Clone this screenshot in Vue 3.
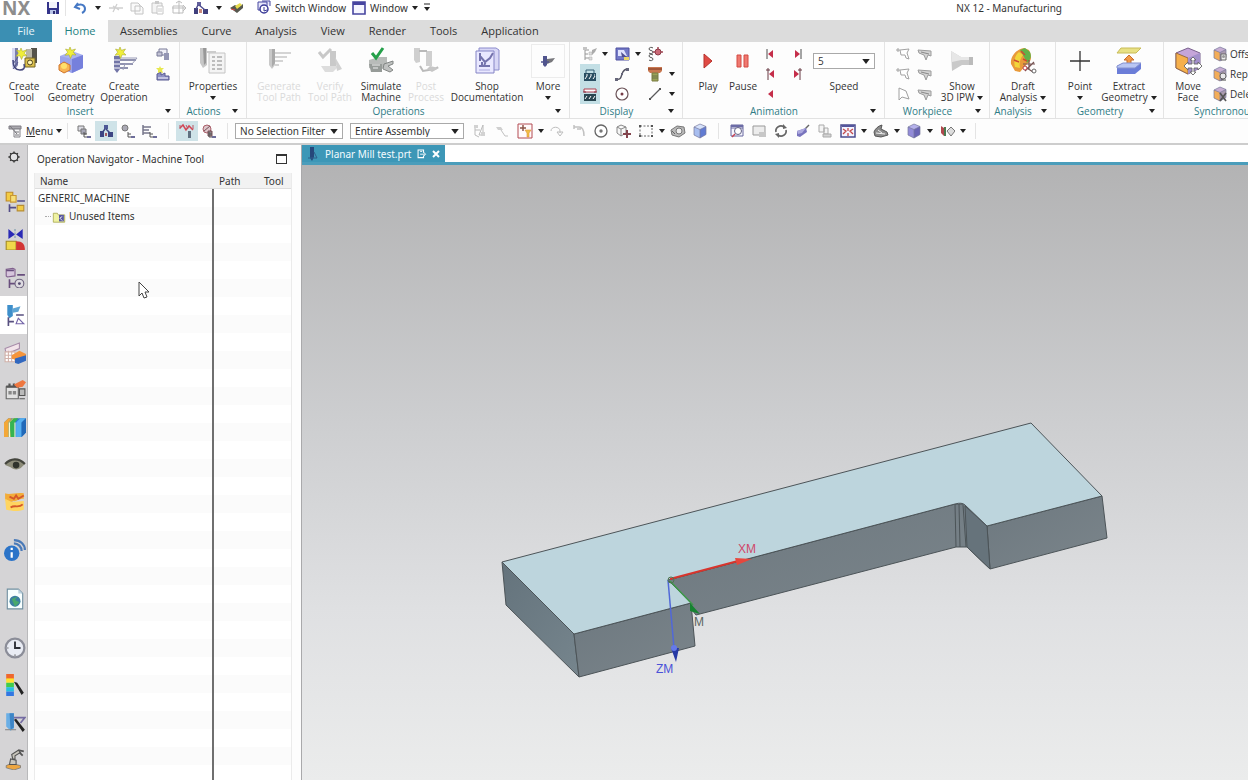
<script setup>
import { ref } from 'vue'

const caret = '<path d="M0 0h6L3 4z" fill="#222"/>'

const mill = (c1, c2) => `<path d="M2 1h6v17l-3 5-3-3z" fill="${c1}"/><path d="M5 1h3v17l-3 4z" fill="${c2}"/>`
const star = (x, y) => `<path transform="translate(${x} ${y})" d="M5 0l1.4 3.3L10.500 2 8.300 5.200 11 8 7.200 7.700 5.500 11.500 4 7.800 0 8.300 2.700 5.200.5 2l3.300 1z" fill="#f0ee3a" stroke="#a9ab35" stroke-width=".6"/>`
const flag = '<path d="M1 4h4M3 2v4M5 4l9-1-2 4 2 6-3-1-1-3-4 0z" fill="#fff" stroke="#a3a3a3"/>'
const flagShade = '<path d="M1 4l13 1v5l-3-1-2 5-2-5-5-2z" fill="#d3d3d3" stroke="#9c9c9c"/><path d="M4 6l8 2" stroke="#888"/>'
const treeNode = '<path d="M8 9v5h5M8 11h3" fill="none" stroke="#555"/><path d="M11 13h4v2h-4z" fill="#6d6d9a"/>'
const cubeOf = (a, b, c) => `<path d="M8 1l6 2.500v8L8 15 2 12V4z" fill="${a}"/><path d="M2 4l6 2.500V15l-6-3z" fill="${b}"/><path d="M8 6.500l6-3v8L8 15z" fill="${c}"/><path d="M8 1l6 2.500v8L8 15 2 12V4zM2 4l6 2.500 6-3M8 6.500V15" fill="none" stroke="#77799c" stroke-width=".7"/>`

const icons = {
  save: '<path d="M2 2h12v12H2z" fill="#34348a"/><path d="M4 2h8v6H4z" fill="#f4f4fb"/><path d="M5 10h6v4H5z" fill="#b9c4e8"/><path d="M8 11h2v3H8z" fill="#2d2d70"/>',
  undo: '<path d="M6 3L3 7l5 2" fill="none" stroke="#4578c4" stroke-width="2"/><path d="M4 6c5-3 9-1 9 3 0 2-1 3-3 4" fill="none" stroke="#4578c4" stroke-width="2"/>',
  cut: '<path d="M1 8h14M9 4L5 12M5 6l6 4" stroke="#cfcfcf" stroke-width="1.300" fill="none"/>',
  copy: '<path d="M2 3h7l2 2v6H2zM6 6h6l2 2v6H6z" fill="#fafafa" stroke="#c4c4c4"/>',
  paste: '<path d="M2 3h10v10H2z" fill="#f4f4f4" stroke="#c4c4c4"/><path d="M5 1h4v3H5z" fill="#c9c9c9"/><path d="M7 6h6v8H7zM8 9h4M8 11h4" fill="#fff" stroke="#c8c8c8"/>',
  target: '<path d="M2 6h10v7H2zM8 1v13M1 8h14M5 3l3-2 3 2M12 5l3 3-3 3" fill="none" stroke="#bdbdbd"/>',
  nav: '<path d="M4 2h4v4H4z" fill="#63609c"/><path d="M1 8h4v6H1zM10 9h5v5h-5z" fill="#403f7c"/><path d="M6 5l6 5M5 5L3 9" stroke="#514f90" stroke-width="1.500"/><path d="M6 9h3v4H6z" fill="#c98a7b"/>',
  touch: '<path d="M1 8l5-3 4 2 4-3v4l-6 5z" fill="#57584f"/><path d="M6 6l5-3 2 2-5 4z" fill="#e7dc4d"/><path d="M2 9l4 1" stroke="#d44"/>',
  switchw: '<path d="M2 2h9v8H2zM6 1h8v5" fill="#e6e6fa" stroke="#4646a0"/><circle cx="8" cy="9" r="4" fill="#fff" stroke="#3b3b98" stroke-width="1.500"/><path d="M8 7v4l3-1" stroke="#3b3b98" fill="none"/>',
  win: '<path d="M2 2h12v12H2z" fill="#f5f5ff" stroke="#4745a0" stroke-width="1.600"/><path d="M2 2h12v3H2z" fill="#4745a0"/>',
  custom: '<path d="M5 4h6" stroke="#222"/><path d="M5 7h6l-3 4z" fill="#222"/>',

  createTool: mill('#d5d8f2', '#7a7dab') + '<path d="M3 17l5-7M3 22l5-7" stroke="#55588e"/><path d="M21 1h6v15h-6z" fill="#55534b"/><path d="M16 2h6v12h-6z" fill="#b9b6a7"/><path d="M15 11h10v9H15z" fill="#dcc14d" stroke="#746525"/><circle cx="20" cy="15.500" r="2.500" fill="#fff3b0" stroke="#4e431b"/><path d="M3 13c0 6 2 10 7 10 4 0 5-2 4-6" fill="none" stroke="#44487c" stroke-width="1.500"/>' + star(6, 1),
  createGeom: '<path d="M3 9l12-5 11 4v13l-11 5L3 21z" fill="#a9b2f0"/><path d="M15 12l11-4v13l-11 5z" fill="#7680dc"/><path d="M3 9l12 3v14L3 21z" fill="#9aa3ea"/><path d="M2 18l5-3 6 3v5l-6 3-5-3z" fill="#f8b455" stroke="#d0752b"/><circle cx="7" cy="19" r="3" fill="#ffe06b"/>' + star(8, 0),
  createOp: '<path d="M4 9h6v13l-3 4-3-4z" fill="#7275a7"/><path d="M4 13h6M4 17h6M4 21h6" stroke="#fff"/><path d="M10 13h16M10 17h13M10 21h8" stroke="#6c6f95" stroke-width="1.500"/><path d="M10 11h17l-5 6h-7l-2 6" fill="none" stroke="#9b9db8"/>' + star(5, 0),
  smallGeom: '<path d="M4 3h8v6H4z" fill="#efeff7" stroke="#797b98"/><path d="M2 6h5v4H2z" fill="#c2c2d4" stroke="#797b98"/><path d="M9 7h5v7H9z" fill="#9496b4"/>',
  smallOp: '<path d="M2 8l4-2v3l4-2v3h4v4H2z" fill="#8e91c5" stroke="#595b92"/><path d="M3 12h10" stroke="#f7f8ff"/><path d="M5 0l1 2h3L7 4l1 3-3-1-2 1V4L1 2h3z" fill="#e7e84d"/>',
  props: '<path d="M1 1h7v17l-4 3-3-5z" fill="#c7c7c7"/><path d="M4 1h3v15l-2 2z" fill="#989898"/><path d="M10 6h16v20H10z" fill="#f4f4f4" stroke="#c4c4c4"/><path d="M13 10h3M13 14h3M13 18h3M13 22h3M18 10h5M18 14h5M18 18h5M18 22h5" stroke="#bdbdbd" stroke-width="2"/><path d="M8 5h9" stroke="#ccc" stroke-width="2"/>',
  gen: '<path d="M4 2h6v16l-3 4-3-4z" fill="#c9c9c9"/><path d="M7 2h3v14l-3 4z" fill="#aaa"/><path d="M10 6h16M10 10h12M10 14h8M10 18h4" stroke="#c6c6c6" stroke-width="1.500"/>',
  verify: '<path d="M3 5l4 5 8-8" fill="none" stroke="#c8c8c8" stroke-width="3"/><path d="M14 4h6v16l-4 3-2-4z" fill="#c9c9c9"/><path d="M5 19h18l-6 6H9z" fill="#ddd"/><path d="M19 10l7 12-5 2z" fill="#d1d1d1"/>',
  simulate: '<path d="M2 13l10-3h8v9l-9 5-9-3z" fill="#b8bbb9"/><path d="M2 17h13v8H4z" fill="#969b98"/><path d="M17 17l9-3v3l-5 2 5 4-3 2-7-3z" fill="#bfc1c0" stroke="#828684"/><path d="M5 18h8M6 21h5" stroke="#eee"/><path d="M5 6l4 5 7-10" fill="none" stroke="#25a04a" stroke-width="3"/>',
  post: '<path d="M2 1h6v14l-4 1-2-3zM14 4h6v15h-6z" fill="#cfcfcf"/><path d="M7 4h8M8 19l3 5 12-2 3-2" fill="none" stroke="#b9b9b9" stroke-width="2"/><path d="M18 19l9 2-7 4-5-3z" fill="#c6c6c6"/>',
  shop: '<path d="M6 1h17l3 2v20H6z" fill="#d8d7f6" stroke="#8b8bcc"/><path d="M3 4h18v22H3z" fill="#e9e8ff" stroke="#8585c5"/><path d="M7 6v8M7 9l5 6 5-4 3-5M6 19h11M9 15v5M13 14l-2 5" fill="none" stroke="#7473ad" stroke-width="2"/><path d="M6 23h11" stroke="#acaae0"/>',
  more: '<path d="M3 3h4v9l-2 2-2-2z" fill="#51558e"/><path d="M7 6l8-1-3 4-5 2z" fill="#77777c"/><path d="M1 9h8" stroke="#51558e" stroke-width="1.500"/>',

  dispTree: '<path d="M3 1v13M3 4h4M3 8h3M3 12h4" stroke="#969696"/><path d="M1 1h4v3H1z" fill="#c4c4c4"/><path d="M7 6h3v3H7zM7 11h3v3H7z" fill="#ddd" stroke="#aaa" stroke-width=".5"/><path d="M10 4l5-2-2 4-3 3z" fill="#ababab"/>',
  dispWin: '<path d="M2 2h13v12H2z" fill="#7379c6" stroke="#4e51a0"/><path d="M4 4h6l3 6H4z" fill="#dfe3ff"/><path d="M7 6l6 5H8z" fill="#4f4f91"/><path d="M10 11h5v3h-5z" fill="#e9d667"/>',
  ss: '<path d="M6 2c-1-1-4-1-4 1s4 1 4 3-3 2-4 1M6 9c-1-1-4-1-4 1s4 1 4 3-3 2-4 1" fill="none" stroke="#555"/><path d="M6 6h10M11 1v5" stroke="#a34957" stroke-width="1.500"/><circle cx="11" cy="6" r="3" fill="#ca6a77" stroke="#8b3b47"/>',
  machA: '<path d="M2 7h12v8H2z" fill="#294e62"/><path d="M4 7V4h8v3" fill="none" stroke="#355f75"/><path d="M4 9h2M8 9h2M12 9h1M3 13l2-3M7 13l2-3M11 13l2-3" stroke="#fff"/>',
  machB: '<path d="M2 3h12v3H2z" fill="#fff" stroke="#ad4150"/><path d="M2 8h12v7H2z" fill="#294650"/><path d="M3 13l2-3M7 13l2-3M11 13l2-3" stroke="#fff"/><path d="M1 6h3M12 6h3" stroke="#883644"/>',
  curve: '<path d="M2 13c5 1 5-2 6-5s2-5 6-5" fill="none" stroke="#545463" stroke-width="1.400"/><path d="M1 12h3v3H1zM12 2h3v3h-3zM7 7h2v2H7z" fill="#66667a"/>',
  circle: '<circle cx="8" cy="8" r="6" fill="#fff" stroke="#6b5358" stroke-width="1.200"/><circle cx="8" cy="8" r="1.500" fill="#763c47"/>',
  toolDisp: '<path d="M1 1h14v4l-2 2H3L1 5z" fill="#c87851"/><path d="M1 2h14v2H1z" fill="#a35637"/><path d="M5 7h6v8H5z" fill="#9ba358" stroke="#7a7d42"/><path d="M5 10h6M5 12h6" stroke="#6a7348"/>',
  line: '<path d="M3 13L13 3" stroke="#59595b" stroke-width="1.200"/><path d="M2 12h2v2H2zM12 2h2v2h-2z" fill="#555"/>',
  play: '<path d="M6 3l8 7-8 7z" fill="#e04b44" stroke="#b7322d"/>',
  pause: '<path d="M4 4h4v12H4zM11 4h4v12h-4z" fill="#ef7970" stroke="#d44a42"/>',
  first: '<path d="M4 3v10" stroke="#4c4c4c"/><path d="M10 4v8L5 8z" fill="#c52e4a"/>',
  last: '<path d="M12 3v10" stroke="#4c4c4c"/><path d="M6 4v8l5-4z" fill="#c52e4a"/>',
  prev: '<path d="M5 2v12M3 4h4" stroke="#673943"/><path d="M11 4v8L6 8z" fill="#c52e4a"/>',
  next: '<path d="M11 2v12M9 4h4" stroke="#673943"/><path d="M5 4v8l5-4z" fill="#c52e4a"/>',
  rev: '<path d="M10 4v8L5 8z" fill="#c52e4a"/>',
  flag, flagShade,
  flagC: '<path d="M4 2v12l3-3 7 2-3-8z" fill="#fff" stroke="#a0a0a0"/>',
  ipw: '<path d="M3 4l10 6h12v8H14L4 24z" fill="#c9c9c9"/><path d="M3 4l10 6h12v3H13L4 15z" fill="#e7e7e7"/><path d="M21 10h4v8h-4z" fill="#bbb"/>',
  draft: '<path d="M2 17C1 9 8 2 15 1l5 2c3 6 3 11-2 14l-7 8-5-1z" fill="#e99a3a"/><path d="M11 3l5-2 5 4c2 5 0 8-3 11l-3-6z" fill="#61b249"/><path d="M10 5c-3 2-6 8-4 15l5 1c-1-5 0-9 3-13z" fill="#f2d53a"/><path d="M12 4l4 4M5 13l5 2M14 12l4 2" stroke="#d04a32" stroke-width="1.500"/><path d="M14 17h12M16 24l9-9M15 19l9 6M20 13v10" stroke="#765352" stroke-width="1.200"/><circle cx="16" cy="21" r="2" fill="#fff" stroke="#b93d48"/><circle cx="25" cy="24" r="2" fill="#fff" stroke="#666"/>',
  point: '<path d="M14 4v20M4 14h20" stroke="#333" stroke-width="1.300"/>',
  extract: '<path d="M6 1h20l-5 5H2z" fill="#e8e083" stroke="#c8bc59"/><path d="M14 8l5 5h-3v6h-4v-6H9z" fill="#f29945" stroke="#c86d2c"/><path d="M2 19l6-3h18v6l-6 5H2z" fill="#6b7dd8"/><path d="M2 19l6-3h18l-6 5H2z" fill="#b9c6f4" stroke="#8592d0"/>',
  moveFace: '<path d="M2 6l12-5 12 5v15l-12 6L2 21z" fill="#c5a5d9" stroke="#79618d"/><path d="M2 6l12 5v16L2 21z" fill="#f6b04c" stroke="#9a6c43"/><path d="M14 11l12-5v15l-12 6z" fill="#a390cb"/><path d="M19 10l3 3h-2v4h4v-2l4 4-4 4v-2h-4v4h2l-3 3-3-3h2v-4h-4v2l-4-4 4-4v2h4v-4h-2z" fill="#fff" stroke="#666" stroke-width=".9"/>',
  face: cubeOf('#c7aed3', '#f3ad58', '#a99aaf') + '<path d="M9 8h5v6H9z" fill="#eee" stroke="#666"/><circle cx="11.500" cy="10.500" r="1.500" fill="#999"/>',
  face2: cubeOf('#c7aed3', '#f3ad58', '#a99aaf') + '<circle cx="11" cy="10" r="3" fill="#e8e8ea" stroke="#666"/><path d="M9 14h5" stroke="#444"/>',
  face3: cubeOf('#c7aed3', '#f3ad58', '#a99aaf') + '<path d="M8 7l6 8M14 7l-6 8" stroke="#555" stroke-width="1.700"/>',

  menu: '<path d="M2 3h12v3H2z" fill="#aaa9af" stroke="#7e7d84"/><path d="M7 6h6v8H7z" fill="#f5f5f6" stroke="#848389"/><path d="M3 3l7 8M8 9h4M8 12h4" stroke="#77767b"/>',
  selA: '<path d="M2 3h6v5H2z" fill="#dcdce4" stroke="#777"/><path d="M5 6h5v5H5z" fill="#a7a7b7" stroke="#777"/>' + treeNode,
  selB: '<path d="M6 2h4v4H6z" fill="#4c5896"/><path d="M2 8h4v6H2zM10 9h5v5h-5z" fill="#3d4683"/><path d="M8 6l5 5M7 6l-3 4" stroke="#3d4683" stroke-width="1.500"/><path d="M7 10h2v3H7z" fill="#a35b62"/>',
  selC: '<circle cx="5" cy="5" r="3" fill="#aaa9b4" stroke="#777"/>' + treeNode,
  selD: '<path d="M1 2v10M1 4h8M1 7h6M1 10h7" stroke="#77778c" stroke-width="1.500"/>' + treeNode,
  selE: '<path d="M1 5l3-3 3 5 3-4 4 4" fill="none" stroke="#d44555" stroke-width="1.500"/><path d="M9 8h3v7H9z" fill="#607080"/><path d="M1 2v4M7 2l2 4M14 2v4" stroke="#b95563"/>',
  selF: '<circle cx="6" cy="6" r="4" fill="#ddc5ca" stroke="#aa5f69"/><path d="M3 8l6-5M7 8h4v5H7z" stroke="#785158" fill="#8b8085"/>' + treeNode,
  grayA: '<path d="M3 3v9l4 2M3 7h5M11 2L7 12h4z" fill="none" stroke="#bbb"/><path d="M2 2h4v3H2zM9 9h4v4H9z" fill="#d2d2d2"/>',
  grayB: '<path d="M2 4h5l2 3H4z" fill="#d0d0d0"/><path d="M7 7l4 6h3" stroke="#c1c1c1" fill="none"/>',
  snap: '<path d="M1 1h14v14H1z" fill="#fffafa" stroke="#b34b52"/><path d="M3 5h6M6 2v6" stroke="#8c5448" stroke-width="1.500"/><path d="M8 7h6l-2 3v4h-2v-4z" fill="#efbf45" stroke="#e09238" stroke-width=".6"/>',
  grayC: '<path d="M2 8c0-5 9-5 9 0v2M8 9h6l-3 4z" fill="none" stroke="#bdbdbd"/>',
  grayD: '<path d="M3 4h5c4 0 5 3 5 9M3 2v4M6 6h4" fill="none" stroke="#c1c1c1" stroke-width="1.500"/>',
  ring: '<circle cx="8" cy="8" r="6" fill="#fff" stroke="#666" stroke-width="1.300"/><circle cx="8" cy="8" r="1.700" fill="#777"/>',
  cubePlus: '<path d="M2 4l4-2 5 2v6l-5 3-4-3zM2 4l4 2 5-2M6 6v7" fill="#f6f6f6" stroke="#888"/><path d="M12 7v8M8 11h8" stroke="#83444d" stroke-width="2"/>',
  dash: '<path d="M2 3h12v10H2z" fill="none" stroke="#666" stroke-dasharray="2 1.500"/><path d="M1 2h2v2H1zM13 2h2v2h-2zM1 12h2v2H1zM13 12h2v2h-2z" fill="#555"/>',
  rock: '<path d="M1 7l6-4 7 1 1 6-6 4-7-2z" fill="#b9b9b9" stroke="#777"/><circle cx="9" cy="8" r="3" fill="#eee" stroke="#777"/><path d="M2 8l3 3" stroke="#666"/>',
  cubeBlue: cubeOf('#d6e2fb', '#a8bef0', '#617bd2'),
  cubeViolet: cubeOf('#b5b1eb', '#928bd8', '#6964b5'),
  fit: '<path d="M2 2h12v11H2zM2 5h12" fill="#f7f7ff" stroke="#67679f"/><path d="M2 2h12v2H2z" fill="#6c6ca6"/><circle cx="9" cy="8" r="3.500" fill="#fff" stroke="#616184"/><path d="M6 11l-3 3" stroke="#c94252" stroke-width="1.500"/>',
  shot: '<path d="M2 3h12v9H2z" fill="#ececec" stroke="#999"/><path d="M8 9h7v5H8z" fill="#c7c7c7"/>',
  rotate: '<path d="M3 9a5 5 0 018-5M13 7a5 5 0 01-8 5" fill="none" stroke="#666" stroke-width="1.700"/><path d="M10 1l4 4-4 1zM6 15l-4-4 4-1z" fill="#666"/>',
  brush: '<path d="M10 6l4-4" stroke="#666" stroke-width="1.500"/><path d="M2 8l9-3 1 4-7 5-3-1z" fill="#7874bd"/><path d="M2 8l9-3-4 5-4 1z" fill="#ada9de"/>',
  grayE: '<path d="M2 2h5v7H2zM7 5h4v6H7z" fill="#f4f4f4" stroke="#aaa"/><path d="M6 11h8v3H6z" fill="#d3d3d3" stroke="#aaa"/>',
  layout: '<path d="M1 2h14v12H1z" fill="#f4f4ff" stroke="#4b4c90" stroke-width="1.500"/><path d="M2 2h12v2H2z" fill="#54559c"/><path d="M3 6l3 2-3 3M13 6l-3 2 3 3M8 5v3M8 10v3" fill="none" stroke="#c34949" stroke-width="1.300"/>',
  swirl: '<path d="M1 9c1-3 4-6 8-7L8 6l6 3 1 3-7 2-6-1z" fill="#8b8b8b" stroke="#555"/><path d="M3 10l9 1M5 7l4 3" stroke="#eee"/>',
  section: '<path d="M2 3l3 2v8l-3-3z" fill="#b0484e"/><path d="M5 4h2v9H5z" fill="#497a50"/><path d="M8 8l4-4 4 4-4 5z" fill="#ddd" stroke="#777"/>',

  gear: '<path d="M10 2v3M10 15v3M2 10h3M15 10h3M4.500 4.500l2 2M13.500 13.500l2 2M15.500 4.500l-2 2M6.500 13.500l-2 2" stroke="#333" stroke-width="2"/><circle cx="10" cy="10" r="5.500" fill="#e3e3e5" stroke="#333" stroke-width="1.800"/>',
  asm: '<path d="M2 2h6v8H2z" fill="#f3cb43" stroke="#be8b2a"/><path d="M6 5h5v6H6z" fill="#f7df78" stroke="#c79734"/><path d="M12 10h7M5 13v7M5 16h6" stroke="#534d88" stroke-width="1.500"/><path d="M12 14h6v5h-6z" fill="#f2cc46" stroke="#b88d33"/>',
  constraint: '<path d="M4 1v9l6-4zM17 1v9l-6-4z" fill="#2a2ab5"/><path d="M10 1v9" stroke="#79a" stroke-dasharray="2 1"/><path d="M2 12h9v8H2z" fill="#f0d84a" stroke="#a28b26"/><path d="M11 12c6 0 8 3 8 8h-8z" fill="#d33535"/>',
  part: '<path d="M2 3l6-1 2 1v6l-7 1-1-1z" fill="#d6c5dc" stroke="#81608d"/><path d="M2 4h7M12 8h7M5 12v8M5 16h5" stroke="#684e7d" stroke-width="1.500" fill="none"/><circle cx="14" cy="16" r="4" fill="#dedbe1" stroke="#6f6480"/><circle cx="14" cy="16" r="1.300" fill="#554c70"/>',
  opnav: '<path d="M3 1h5v10l-3 2-2-3z" fill="#3e8fcb"/><path d="M8 4l7-2-2 5-5 1z" fill="#5fa5d4"/><path d="M11 10h7M4 12v8M4 16h5" stroke="#585080" stroke-width="1.500"/><path d="M11 18l2-5 5 5z" fill="#fff" stroke="#7465a8"/>',
  mfeat: '<path d="M1 6l13-5v5L2 11z" fill="#f2e4ea" stroke="#a78ca9"/><path d="M1 9h9v9H1zM4 8v10M7 8v10M1 12h9M1 15h9" fill="#fff" stroke="#d2b2aa"/><path d="M7 12l7-4 6 3v3l-8 3-5-2z" fill="#f5953c"/><path d="M10 15l10-3v5l-7 3-3-1z" fill="#3268bf"/>',
  mcal: '<path d="M2 7h11v11H2z" fill="#e1e1e1" stroke="#666"/><path d="M2 7h11M5 4v4M9 4v4" stroke="#555" stroke-width="2"/><path d="M4 11h3v3H4zM8 11h3v3H8z" fill="#888"/><path d="M9 5l8-4 3 2-3 4-5 1z" fill="#ee7740"/><path d="M14 9h5v6h-5zM14 18h5" fill="#bbb" stroke="#555"/>',
  books: '<path d="M0 6l4-4h16v13l-4 4H0z" fill="#2f7ccc"/><path d="M0 6l4-4h3L4 6v13H0z" fill="#f3a737"/><path d="M4 6l4-4h3L9 6v13H4z" fill="#e8c34e"/><path d="M5 6l4-4h4l-3 4v13H6z" fill="#36b451"/><path d="M11 6l4-4h5l-4 4v13h-5z" fill="#54aef0"/><path d="M16 6l4-4v13l-4 4z" fill="#2269b8"/><path d="M5 6v13M10 6v13" stroke="#f4f7d8"/>',
  eye: '<path d="M1 11c4-6 12-7 18-1l-3 3c-3 3-8 2-10 0z" fill="#8d8c79"/><circle cx="11" cy="11" r="3" fill="#30332c"/><path d="M1 10c5-5 12-6 18 0" stroke="#44453d" fill="none" stroke-width="2"/>',
  pmi: '<path d="M1 3c4 2 9-1 17 0v5c-6 0-7 3-9 2-4 2-6 0-8-1z" fill="#f3ac39"/><path d="M1 8l6 3 11-1v8c-6 2-11 1-16 0z" fill="#ffd560"/><path d="M5 6l4 2 2-3 2 3 5-3M6 16c4-3 7 1 11-3" fill="none" stroke="#d5582a" stroke-width="1.700"/>',
  info: '<circle cx="7" cy="13" r="7" fill="#2c74c8"/><path d="M7 12v5M7 8v2" stroke="#fff" stroke-width="2"/><path d="M9 4c4 0 7 3 7 7M9 1c6 0 10 4 10 9" fill="none" stroke="#4a7ab8" stroke-width="2"/>',
  web: '<path d="M3 1h10l4 4v14H3z" fill="#f8ffff" stroke="#708fa0"/><path d="M13 1v4h4" fill="#bcd2df"/><circle cx="10" cy="12" r="5" fill="#3b7fa0"/><path d="M7 10l5-2-2 3 4 2-4 4z" fill="#49a96c"/>',
  clock: '<circle cx="10" cy="10" r="8.500" fill="#e9ecf4" stroke="#8b8d98" stroke-width="2"/><path d="M10 4v6h5" fill="none" stroke="#2d2f37" stroke-width="1.700"/><path d="M10 16v1M3 10h1" stroke="#444"/>',
  palette: '<path d="M2 0h7v5H2z" fill="#ef672d"/><path d="M2 4h7v4H2z" fill="#ffe32f"/><path d="M2 8h7v4H2z" fill="#41cc4d"/><path d="M2 12h7v4H2z" fill="#27bfe0"/><path d="M2 16h7v4H2z" fill="#3377e2"/><path d="M9 7l3 1 6 9-2 2z" fill="#222"/>',
  toolpal: '<path d="M2 2h7v14l-3 2-4-4z" fill="#6aaee5"/><path d="M5 2h4v13l-3 2z" fill="#3e85c5"/><path d="M9 6h10l-4 5" fill="none" stroke="#746ba2" stroke-width="1.500"/><path d="M9 8l2-1 8 10-2 2z" fill="#222"/><path d="M1 17h10" stroke="#888"/>',
  robot: '<path d="M2 16l5-2 8 2v2l-6 2-7-2z" fill="#eda641" stroke="#777" stroke-width=".7"/><path d="M5 15l1-5 5 1v4zM8 10L7 6l6-4 2 2-5 3v3z" fill="#c9c6bd" stroke="#555"/><path d="M13 2l5 1M14 4l3 3" stroke="#555" stroke-width="1.700"/>',
  folder: '<path d="M1 4h5l1 2h8v9H1z" fill="#eff2a2" stroke="#a7a850"/><path d="M8 6h6v8H8z" fill="#5857a0"/><path d="M12 8l-3 2 3 3" stroke="#fff" fill="none"/>',
  docTool: '<path d="M6 1h4v10l-2 4-2-3z" fill="#26477b"/><path d="M10 6l3 6H4" fill="none" stroke="#2f5e8b"/>',
  popout: '<path d="M11 7V3H3v11h8v-3" fill="none" stroke="#fff" stroke-width="1.500"/><path d="M6 9h7M11 6l3 3-3 3M6 5h3" fill="none" stroke="#fff" stroke-width="1.300"/>',
}

const quick = [
  { i: 'save', t: 'Save' }, { sep: true }, { i: 'undo', t: 'Undo', a: true }, { i: 'cut', t: 'Cut' },
  { i: 'copy', t: 'Copy' }, { i: 'paste', t: 'Paste' }, { i: 'target', t: 'Transform' },
  { i: 'nav', t: 'Navigator views', a: true }, { i: 'touch', t: 'Touch mode' },
]
const tabs = ['File', 'Home', 'Assemblies', 'Curve', 'Analysis', 'View', 'Render', 'Tools', 'Application']
const current = ref('Home')

const groups = [
  { id: 'insert', label: 'Insert', items: [
    { i: 'createTool', l: ['Create', 'Tool'] }, { i: 'createGeom', l: ['Create', 'Geometry'] }, { i: 'createOp', l: ['Create', 'Operation'] },
    { col: [{ i: 'smallGeom', t: 'Create Method' }, { i: 'smallOp', t: 'Create Program' }] } ] },
  { id: 'actions', label: 'Actions', items: [{ i: 'props', l: ['Properties'], drop: true }] },
  { id: 'operations', label: 'Operations', items: [
    { i: 'gen', l: ['Generate', 'Tool Path'], off: true }, { i: 'verify', l: ['Verify', 'Tool Path'], off: true },
    { i: 'simulate', l: ['Simulate', 'Machine'] }, { i: 'post', l: ['Post', 'Process'], off: true },
    { i: 'shop', l: ['Shop', 'Documentation'] }, { i: 'more', l: ['More'], drop: true, framed: true } ] },
  { id: 'display', label: 'Display', items: [
    { col: [{ i: 'dispTree', t: 'Display mode' }, { i: 'machA', t: 'Show machine', on: true }, { i: 'machB', t: 'Show setup', on: true }] },
    { carets: [1, 0, 0] },
    { col: [{ i: 'dispWin', t: 'Display window' }, { i: 'curve', t: 'Show curve' }, { i: 'circle', t: 'Show circle' }] },
    { carets: [1, 0, 0] },
    { col: [{ i: 'ss', t: 'Feeds and speeds' }, { i: 'toolDisp', t: 'Tool display' }, { i: 'line', t: 'Path line' }] },
    { carets: [0, 1, 1] } ] },
  { id: 'animation', label: 'Animation', items: [
    { i: 'play', l: ['Play'], box: 20 }, { i: 'pause', l: ['Pause'], box: 20 },
    { col: [{ i: 'first', t: 'To start' }, { i: 'prev', t: 'Previous operation' }, { i: 'rev', t: 'Play backwards' }] },
    { col: [{ i: 'last', t: 'To end' }, { i: 'next', t: 'Next operation' }, {}] },
    { speed: true } ] },
  { id: 'workpiece', label: 'Workpiece', items: [
    { col: [{ i: 'flag', t: 'Show 2D' }, { i: 'flag', t: 'Show fill' }, { i: 'flagC', t: 'Show end' }] },
    { col: [{ i: 'flagShade', t: 'Save IPW' }, { i: 'flagShade', t: 'Merge IPW' }, { i: 'flagShade', t: 'Delete IPW' }] },
    { i: 'ipw', l: ['Show', '3D IPW'], drop: true } ] },
  { id: 'analysis', label: 'Analysis', items: [{ i: 'draft', l: ['Draft', 'Analysis'], drop: true }] },
  { id: 'geometry', label: 'Geometry', items: [{ i: 'point', l: ['Point'], drop: true }, { i: 'extract', l: ['Extract', 'Geometry'], drop: true }] },
  { id: 'sync', label: 'Synchronous Modeling', items: [
    { i: 'moveFace', l: ['Move', 'Face'] },
    { col: [{ i: 'face', n: 'Offset Region' }, { i: 'face2', n: 'Replace Face' }, { i: 'face3', n: 'Delete Face' }] } ] },
]

const modeIcons = [['selA', 'Program order view'], ['selB', 'Machine tool view', true], ['selC', 'Geometry view'], ['selD', 'Method view']]
const pathIcons = [['selE', 'Show tool path', true], ['selF', 'Hide tool path']]
const snapIcons = [['grayA', 'Highlight'], ['grayB', 'Deselect'], ['snap', 'Snap point', 1], ['grayC', 'Arc'], ['grayD', 'Bend'], ['ring', 'Center'], ['cubePlus', 'Body point'], ['dash', 'Rectangle select', 1], ['rock', 'Facets'], ['cubeBlue', 'Solid']]
const viewIcons = [['fit', 'Fit'], ['shot', 'Snapshot'], ['rotate', 'Rotate'], ['brush', 'Style'], ['grayE', 'Arrange'], ['layout', 'Layout', 1], ['swirl', 'Orient', 1], ['cubeViolet', 'Shaded', 1], ['section', 'Section', 1]]

const rail = [
  ['gear', 'Settings'], ['asm', 'Assembly Navigator'], ['constraint', 'Constraint Navigator'], ['part', 'Part Navigator'],
  ['opnav', 'Operation Navigator'], ['mfeat', 'Machining Features'], ['mcal', 'Machine Tool Navigator'], ['books', 'Reuse Library'],
  ['eye', 'HD3D Tools'], ['pmi', 'Process Library'], ['info', 'Information'], ['web', 'Web Browser'], ['clock', 'History'],
  ['palette', 'Roles'], ['toolpal', 'Machining Wizard'], ['robot', 'Robot Tools'],
]
const filter = ref('No Selection Filter')
const scope = ref('Entire Assembly')
const speed = ref('5')
</script>

<template>
  <div class="app">
    <header class="titlebar">
      <strong class="logo">NX</strong>
      <template v-for="(q, k) in quick" :key="k">
        <span v-if="q.sep" class="vsep"></span>
        <button v-else class="tool" :class="{ wide: q.a }" :aria-label="q.t">
          <svg class="ic" viewBox="0 0 16 16" v-html="icons[q.i]" />
          <svg v-if="q.a" class="caret" viewBox="0 0 6 4" v-html="caret" />
        </button>
      </template>
      <button class="named"><svg class="ic" viewBox="0 0 16 16" v-html="icons.switchw" />Switch Window</button>
      <button class="named"><svg class="ic" viewBox="0 0 16 16" v-html="icons.win" />Window<svg class="caret" viewBox="0 0 6 4" v-html="caret" /></button>
      <button class="customize" aria-label="Customize"><svg class="ic" viewBox="0 0 16 16" v-html="icons.custom" /></button>
      <h1>NX 12 - Manufacturing</h1>
    </header>

    <nav class="tabs">
      <button v-for="t in tabs" :key="t" :class="{ file: t === 'File', current: t === current }" @click="current = t">{{ t }}</button>
    </nav>

    <section class="ribbon">
      <div v-for="g in groups" :key="g.id" class="group" :class="g.id">
        <div class="items">
          <template v-for="(it, k) in g.items" :key="k">
            <div v-if="it.col" class="stack">
              <template v-for="(s, n) in it.col" :key="n">
                <button v-if="s.i" class="small" :class="{ on: s.on }" :aria-label="s.t || s.n">
                  <svg class="ic" viewBox="0 0 16 16" v-html="icons[s.i]" /><span v-if="s.n">{{ s.n }}</span>
                </button>
              </template>
            </div>
            <div v-else-if="it.carets" class="stack">
              <span v-for="(c, n) in it.carets" :key="n" class="small"><svg v-if="c" class="caret" viewBox="0 0 6 4" v-html="caret" /></span>
            </div>
            <div v-else-if="it.speed" class="speed">
              <span class="combo">
                <select id="speed" v-model="speed"><option v-for="n in 10" :key="n">{{ n }}</option></select>
                <svg class="caret" viewBox="0 0 6 4" v-html="caret" />
              </span>
              <label for="speed">Speed</label>
            </div>
            <button v-else class="big" :disabled="it.off">
              <span class="pic" :class="{ framed: it.framed }">
                <svg :class="it.framed ? 'ic' : 'bic'" :viewBox="it.framed ? '0 0 16 16' : it.box ? '-4 -4 28 28' : '0 0 28 28'" v-html="icons[it.i]" />
              </span>
              <span class="txt">{{ it.l[0] }}</span>
              <span class="txt">{{ it.l[1] }}<svg v-if="it.drop" class="caret" viewBox="0 0 6 4" v-html="caret" /></span>
            </button>
          </template>
        </div>
        <div class="foot"><span>{{ g.label }}</span><svg class="caret" viewBox="0 0 6 4" v-html="caret" /></div>
      </div>
    </section>

    <section class="selbar">
      <button class="menu"><svg class="ic" viewBox="0 0 16 16" v-html="icons.menu" /><span><u>M</u>enu</span><svg class="caret" viewBox="0 0 6 4" v-html="caret" /></button>
      <span class="vsep"></span>
      <button v-for="m in modeIcons" :key="m[0]" class="tool" :class="{ on: m[2] }" :aria-label="m[1]"><svg class="ic" viewBox="0 0 16 16" v-html="icons[m[0]]" /></button>
      <span class="vsep"></span>
      <button v-for="m in pathIcons" :key="m[0]" class="tool" :class="{ on: m[2] }" :aria-label="m[1]"><svg class="ic" viewBox="0 0 16 16" v-html="icons[m[0]]" /></button>
      <span class="vsep"></span>
      <span class="combo filter">
        <select v-model="filter" aria-label="Selection filter"><option>No Selection Filter</option><option>Face</option><option>Edge</option></select>
        <svg class="caret" viewBox="0 0 6 4" v-html="caret" />
      </span>
      <span class="combo scope">
        <select v-model="scope" aria-label="Selection scope"><option>Entire Assembly</option><option>Work Part Only</option></select>
        <svg class="caret" viewBox="0 0 6 4" v-html="caret" />
      </span>
      <button v-for="m in snapIcons" :key="m[0]" class="tool" :class="{ wide: m[2] }" :aria-label="m[1]"><svg class="ic" viewBox="0 0 16 16" v-html="icons[m[0]]" /><svg v-if="m[2]" class="caret" viewBox="0 0 6 4" v-html="caret" /></button>
      <span class="vsep"></span>
      <button v-for="m in viewIcons" :key="m[0]" class="tool" :class="{ wide: m[2] }" :aria-label="m[1]"><svg class="ic" viewBox="0 0 16 16" v-html="icons[m[0]]" /><svg v-if="m[2]" class="caret" viewBox="0 0 6 4" v-html="caret" /></button>
      <span class="vsep"></span>
    </section>

    <main class="body">
      <nav class="rail">
        <button v-for="r in rail" :key="r[0]" :class="[r[0], { active: r[0] === 'opnav' }]" :aria-label="r[1]"><svg viewBox="0 0 20 20" v-html="icons[r[0]]" /></button>
      </nav>

      <aside class="navigator">
        <div class="navhead">
          <h2>Operation Navigator - Machine Tool</h2>
          <button aria-label="Maximize panel"></button>
        </div>
        <div class="tree">
          <table>
            <thead><tr><th class="name">Name</th><th class="path">Path</th><th>Tool</th></tr></thead>
            <tbody>
              <tr><td>GENERIC_MACHINE</td><td></td><td></td></tr>
              <tr><td><span class="child"><svg class="fold" viewBox="0 0 16 16" v-html="icons.folder" />Unused Items</span></td><td></td><td></td></tr>
              <tr class="rest"><td></td><td></td><td></td></tr>
            </tbody>
          </table>
        </div>
        <svg class="pointer" viewBox="0 0 12 18"><path d="M1 1v14l3-3 2 5 3-1-2-5h4z" fill="#fff" stroke="#444" /></svg>
      </aside>

      <section class="view">
        <div class="doctabs">
          <div class="doctab">
            <svg class="ic" viewBox="0 0 16 16" v-html="icons.docTool" />
            <span>Planar Mill test.prt</span>
            <svg class="pop" viewBox="0 0 16 16" v-html="icons.popout" />
            <button aria-label="Close"><svg viewBox="0 0 8 8"><path d="M1 1l6 6M7 1L1 7" stroke="#fff" stroke-width="2" /></svg></button>
          </div>
        </div>
        <div class="canvas">
          <svg class="scene" viewBox="302 165 946 615" preserveAspectRatio="xMinYMin slice">
            <defs>
              <linearGradient id="wall" x1="0" y1="0" x2="1" y2="1"><stop offset="0" stop-color="#6d787f" /><stop offset="1" stop-color="#7b858b" /></linearGradient>
              <linearGradient id="left" x1="0" y1="0" x2="1" y2="1"><stop offset="0" stop-color="#64737c" /><stop offset="1" stop-color="#76858d" /></linearGradient>
            </defs>
            <g stroke="#4c5458" stroke-width="1" stroke-linejoin="round">
              <path d="M668 580L955 504h10l22 22 3 43-23-22h-11L696 615z" fill="url(#wall)" />
              <path d="M502 562L574 634l5 43-73-72z" fill="url(#left)" />
              <path d="M574 634l117-31 4 43-116 31z" fill="url(#wall)" />
              <path d="M987 526l115-30 5 42-117 31z" fill="url(#wall)" />
              <path d="M965 506l22 20 3 43-23-22z" fill="#66737b" />
              <path d="M502 562L1031 423l71 73-115 30-22-21q-3-3-10-1L668 580l23 23-117 31z" fill="#bdd5dd" />
              <path d="M955 504l1 43M959 504l1 43M963 505l3 42" fill="none" stroke-width="1" />
            </g>
            <path d="M670 579l68-18" stroke="#d8352d" stroke-width="2" />
            <path d="M735 558l17 1-15 6z" fill="#e6473d" />
            <path d="M670 581l23 24" stroke="#3f9b4b" stroke-width="1.500" />
            <path d="M690 603l10 11-10-3z" fill="#168331" />
            <path d="M668 580l6 68" stroke="#5168d8" stroke-width="1.500" />
            <path d="M671 648h8l-3 14z" fill="#2639a5" />
            <circle cx="674" cy="648" r="3" fill="#6579ea" />
            <circle cx="671" cy="580" r="3" fill="none" stroke="#4d7650" />
            <g class="axis">
              <text x="738" y="553" fill="#d0486a">XM</text>
              <text x="694" y="626" fill="#5d665f">M</text>
              <text x="656" y="673" fill="#4a52d8">ZM</text>
            </g>
          </svg>
        </div>
      </section>
    </main>
  </div>
</template>

<style>
html, body, #app { height: 100%; }
body { margin: 0; overflow: hidden; }
</style>

<style scoped>
.app { display: flex; flex-direction: column; height: 100%; overflow: hidden; background: #fff; color: #333; font-family: "Noto Sans", "Open Sans", sans-serif; font-size: 10px; line-height: 12px; }
.app * { box-sizing: border-box; }
button { display: flex; align-items: center; justify-content: center; flex: none; margin: 0; padding: 0; border: 0; background: none; color: inherit; font: inherit; }
svg { display: block; flex: none; }
h1, h2 { margin: 0; font: inherit; }
.ic { width: 16px; height: 16px; }
.bic { width: 28px; height: 28px; }
.caret { width: 6px; height: 4px; }
.tool { width: 22px; height: 20px; }
.tool.wide { width: 33px; gap: 5px; padding-left: 2px; }
.vsep { flex: none; width: 1px; height: 16px; margin: 0 6px; background: #e4e4e4; }

.titlebar { display: flex; align-items: center; flex: none; height: 20px; padding-bottom: 4px; white-space: nowrap; overflow: hidden; }
.logo { flex: none; width: 42px; padding-left: 2px; color: #8d8d8d; font-size: 19px; line-height: 16px; }
.titlebar .tool { width: 21px; }
.titlebar .tool.wide { width: 37px; gap: 7px; padding-left: 0; }
.titlebar .vsep { margin: 0 2px; }
.named { gap: 3px; margin-right: 5px; }
.named .caret { margin-left: 1px; }
.titlebar .tool + .named { margin-left: 9px; }
.customize { margin-left: -4px; }
.titlebar h1 { margin-left: auto; padding-right: 186px; }

.tabs { display: flex; flex: none; height: 22px; background: #dcdcdc; font-family: "Open Sans", sans-serif; font-size: 11px; }
.tabs button { padding: 0 12px; }
.tabs .file { width: 52px; background: #3b8fb3; color: #e6f4fa; }
.tabs .current { width: 56px; background: #fdfdfd; color: #23807f; }

.ribbon { display: flex; flex: none; height: 77px; border-bottom: 1px solid #e2e2e2; background: #fdfdfd; overflow: hidden; font-family: "Open Sans", sans-serif; }
.group { display: flex; flex-direction: column; flex: none; border-right: 1px solid #e4e4e4; }
.items { display: grid; grid-auto-flow: column; flex: 1; padding-top: 2px; justify-content: start; }
.foot { display: grid; grid-template-columns: 1fr 16px; align-items: center; justify-items: center; height: 14px; padding-right: 3px; color: #2f7c86; white-space: nowrap; }
.insert { width: 180px; }
.insert .items { grid-template-columns: 48px 46px 60px 18px; }
.actions { width: 67px; }
.actions .items { grid-template-columns: 66px; }
.operations { width: 323px; }
.operations .items { grid-template-columns: 50px 52px 50px 40px 82px 40px; padding-left: 7px; }
.display { width: 113px; }
.display .items { grid-template-columns: 20px 10px 24px 8px 26px 8px; padding-left: 10px; }
.animation { width: 202px; }
.animation .items { grid-template-columns: 36px 34px 22px 30px 64px; padding-left: 7px; }
.workpiece { width: 105px; }
.workpiece .items { grid-template-columns: 22px 22px 52px; padding-left: 7px; }
.analysis { width: 66px; }
.analysis .items { grid-template-columns: 66px; }
.geometry { width: 108px; }
.geometry .items { grid-template-columns: 48px 50px; }
.sync { width: 200px; border-right: 0; }
.sync .items { grid-template-columns: 48px 1fr; }
.sync .foot { justify-items: start; padding-left: 30px; }

.big { flex-direction: column; justify-content: flex-start; height: 60px; line-height: 11px; white-space: nowrap; }
.big:disabled { color: #dadada; }
.pic { display: grid; place-items: center; width: 34px; height: 34px; margin-bottom: 3px; }
.pic.framed { border: 1px solid #ececec; }
.txt { display: flex; align-items: center; justify-content: center; gap: 3px; min-height: 11px; }
.stack { display: flex; flex-direction: column; }
.small { display: flex; align-items: center; justify-content: center; height: 20px; white-space: nowrap; }
.small.on { background: #c3dfe5; }
.sync .small { justify-content: flex-start; gap: 2px; }
.speed { display: flex; flex-direction: column; align-items: center; gap: 11px; padding-top: 9px; }
.speed .combo { width: 62px; }

.combo { display: grid; flex: none; align-items: center; height: 16px; border: 1px solid #a9a9a9; background: #fff; }
.combo > * { grid-area: 1 / 1; }
.combo select { width: 100%; height: 14px; padding: 0 0 0 4px; border: 0; appearance: none; background: none; color: #333; font: inherit; }
.combo .caret { justify-self: end; width: 8px; height: 5px; margin-right: 4px; pointer-events: none; }

.selbar { display: flex; align-items: center; flex: none; height: 26px; border-bottom: 2px solid #cdcdcd; overflow: hidden; background: #fdfdfd; }
.selbar .vsep { margin: 0 7px; }
.selbar .menu + .vsep { margin: 0 5px; }
.menu { gap: 3px; padding-left: 7px; }
.selbar .tool.on { background: #cfe3e8; }
.filter { width: 108px; }
.scope { width: 114px; margin: 0 5px 0 7px; }

.body { display: flex; flex: 1; min-height: 0; }
.rail { display: flex; flex-direction: column; flex: none; width: 28px; background: #d5d4d6; border-right: 1px solid #b9b9bb; overflow: hidden; }
.rail button { height: 37px; padding-left: 2px; }
.rail svg { width: 22px; height: 22px; }
.rail .gear { height: 24px; margin-bottom: 13px; padding-left: 0; }
.rail .gear svg { width: 14px; height: 14px; }
.rail .asm, .rail .constraint, .rail .part, .rail .opnav { height: 38px; }
.rail .info, .rail .web, .rail .clock { margin-top: 12px; }
.rail .active { background: #fff; }

.navigator { position: relative; display: flex; flex-direction: column; flex: none; width: 274px; padding: 0 9px 0 6px; background: #fdfdfd; border-right: 1px solid #a9a9ab; }
.navhead { display: flex; align-items: center; justify-content: space-between; flex: none; height: 28px; padding: 0 5px 0 3px; }
.navhead button { width: 11px; height: 10px; border: 1px solid #333; border-top-width: 2px; }
.tree { display: grid; flex: 1; min-height: 0; border: 1px solid #ebebeb; border-width: 0 1px; background: repeating-linear-gradient(#fff 0 18px, #fbfbfb 18px 36px) 0 16px / 100% 720px; }
table { width: 100%; height: 100%; border-collapse: separate; border-spacing: 0; table-layout: fixed; }
th { height: 16px; padding: 0 0 0 5px; background: #f2f2f2; border-bottom: 1px solid #dedede; font-weight: 400; text-align: left; }
.name { width: 179px; }
.path { width: 45px; }
td { height: 18px; padding: 0 0 0 3px; }
.rest td { height: auto; }
td:first-child { border-right: 2px solid #6f6f6f; }
.child { display: flex; align-items: center; gap: 3px; padding-left: 7px; }
.child::before { content: ""; width: 6px; margin-right: -2px; border-top: 1px dotted #aaa; }
.fold { width: 14px; height: 13px; }
.pointer { position: absolute; left: 110px; top: 136px; width: 12px; height: 18px; }

.view { display: flex; flex-direction: column; flex: 1; min-width: 0; }
.doctabs { display: flex; flex: none; height: 20px; border-bottom: 3px solid #4a9dbb; }
.doctab { display: flex; align-items: center; gap: 5px; padding: 0 5px 0 2px; background: #3d97b7; color: #f4fcff; }
.doctab .pop { width: 11px; height: 11px; }
.doctab button svg { width: 8px; height: 8px; }
.canvas { flex: 1; min-height: 0; background: linear-gradient(#b3b3b4, #cdced0 42%, #dfe0e2 72%, #ebecec); }
.scene { width: 100%; height: 100%; }
.axis { font: 12px "Liberation Sans", sans-serif; }
</style>
